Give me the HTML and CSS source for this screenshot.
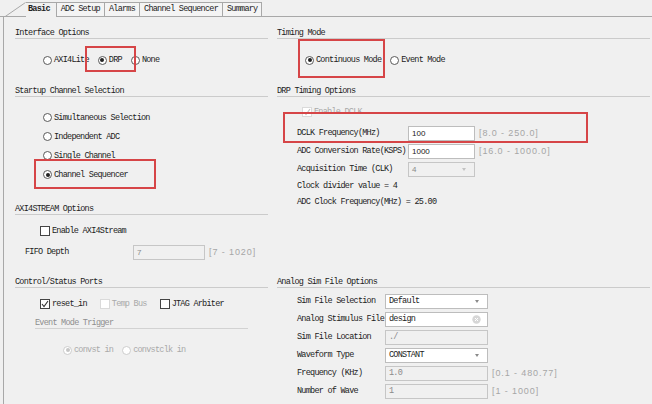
FILE: index.html
```html
<!DOCTYPE html>
<html lang="en">
<head>
    <meta charset="UTF-8">
    <title>XADC Wizard - Basic</title>
    <link rel="stylesheet" href="styles.css">
</head>
<body>
<div class="page">
    <div class="tabs">
        <svg class="tab-slant" width="22" height="15" viewBox="0 0 22 15"><path d="M0.5 15 L21.5 0.5" stroke="#a8a8a8" fill="none"/></svg>
        <div class="tab active">Basic</div>
        <div class="tab">ADC Setup</div>
        <div class="tab">Alarms</div>
        <div class="tab">Channel Sequencer</div>
        <div class="tab">Summary</div>
    </div>

    <div class="panel">
        <!-- Interface Options -->
        <div class="group left">
            <div class="group-title">Interface Options</div>
            <div class="opt-row first">
                <label class="opt"><span class="radio"></span>AXI4Lite</label>
                <label class="opt"><span class="radio on"></span>DRP</label>
                <label class="opt"><span class="radio"></span>None</label>
            </div>
        </div>

        <!-- Timing Mode -->
        <div class="group right">
            <div class="group-title">Timing Mode</div>
            <div class="opt-row first">
                <label class="opt"><span class="radio on"></span>Continuous Mode</label>
                <label class="opt"><span class="radio"></span>Event Mode</label>
            </div>
        </div>

        <!-- Startup Channel Selection -->
        <div class="group left">
            <div class="group-title">Startup Channel Selection</div>
            <div class="opt-list">
                <label class="opt"><span class="radio"></span>Simultaneous Selection</label>
                <label class="opt"><span class="radio"></span>Independent ADC</label>
                <label class="opt"><span class="radio"></span>Single Channel</label>
                <label class="opt"><span class="radio on"></span>Channel Sequencer</label>
            </div>
        </div>

        <!-- DRP Timing Options -->
        <div class="group right drp">
            <div class="group-title">DRP Timing Options</div>
            <div class="check-row dclk">
                <label class="opt disabled"><span class="check off"><svg width="8" height="8" viewBox="0 0 8 8"><path d="M1 4 L3 6.5 L7 1" stroke="#c4c4c4" fill="none" stroke-width="1.2"/></svg></span>Enable DCLK</label>
            </div>
            <div class="fields drp-fields">
                <div class="field-row">
                    <span class="field-label">DCLK Frequency(MHz)</span>
                    <span class="input num">100</span>
                    <span class="range">[8.0 - 250.0]</span>
                </div>
                <div class="field-row">
                    <span class="field-label">ADC Conversion Rate(KSPS)</span>
                    <span class="input num">1000</span>
                    <span class="range">[16.0 - 1000.0]</span>
                </div>
                <div class="field-row">
                    <span class="field-label">Acquisition Time (CLK)</span>
                    <span class="input select disabled num">4<span class="arrow"></span></span>
                </div>
                <div class="info">Clock divider value = 4</div>
                <div class="info">ADC Clock Frequency(MHz) = 25.00</div>
            </div>
        </div>

        <!-- AXI4STREAM Options -->
        <div class="group left">
            <div class="group-title">AXI4STREAM Options</div>
            <div class="check-row stream">
                <label class="opt"><span class="check"></span>Enable AXI4Stream</label>
            </div>
            <div class="field-row fifo">
                <span class="field-label">FIFO Depth</span>
                <span class="input disabled num">7</span>
                <span class="range">[7 - 1020]</span>
            </div>
        </div>

        <!-- Control/Status Ports -->
        <div class="group left">
            <div class="group-title">Control/Status Ports</div>
            <div class="check-row ports">
                <label class="opt"><span class="check"><svg width="8" height="8" viewBox="0 0 8 8"><path d="M1 4 L3 6.5 L7 1" stroke="#333" fill="none" stroke-width="1.1"/></svg></span>reset_in</label>
                <label class="opt disabled"><span class="check off"></span>Temp Bus</label>
                <label class="opt"><span class="check"></span>JTAG Arbiter</label>
            </div>
            <div class="sub-title">Event Mode Trigger</div>
            <div class="opt-row trigger">
                <label class="opt disabled"><span class="radio on off"></span>convst in</label>
                <label class="opt disabled"><span class="radio off"></span>convstclk in</label>
            </div>
        </div>

        <!-- Analog Sim File Options -->
        <div class="group right">
            <div class="group-title">Analog Sim File Options</div>
            <div class="fields sim-fields">
                <div class="field-row">
                    <span class="field-label">Sim File Selection</span>
                    <span class="input wide select">Default<span class="arrow"></span></span>
                </div>
                <div class="field-row">
                    <span class="field-label">Analog Stimulus File</span>
                    <span class="input wide">design<svg class="clear" width="9" height="9" viewBox="0 0 9 9"><circle cx="4.5" cy="4.5" r="4.2" fill="#d6d6d6"/><path d="M3 3 L6 6 M6 3 L3 6" stroke="#fff" stroke-width="1"/></svg></span>
                </div>
                <div class="field-row">
                    <span class="field-label">Sim File Location</span>
                    <span class="input wide disabled">./</span>
                </div>
                <div class="field-row">
                    <span class="field-label">Waveform Type</span>
                    <span class="input wide select">CONSTANT<span class="arrow"></span></span>
                </div>
                <div class="field-row">
                    <span class="field-label">Frequency (KHz)</span>
                    <span class="input wide disabled">1.0</span>
                    <span class="range">[0.1 - 480.77]</span>
                </div>
                <div class="field-row">
                    <span class="field-label">Number of Wave</span>
                    <span class="input wide disabled">1</span>
                    <span class="range">[1 - 1000]</span>
                </div>
            </div>
        </div>
    </div>

    <!-- red annotation boxes -->
    <div class="mark mark-drp"></div>
    <div class="mark mark-seq"></div>
    <div class="mark mark-cont"></div>
    <div class="mark mark-dclk"></div>
</div>
</body>
</html>
```

FILE: styles.css
```css
body {
    margin: 0;
    background: #f0f0f0;
    font-family: "Liberation Mono", monospace;
    font-size: 8.5px;
    letter-spacing: -0.75px;
    color: #222;
}
.page {
    position: relative;
    width: 652px;
    height: 404px;
    overflow: hidden;
}
.tabs {
    display: flex;
    align-items: flex-end;
    height: 16px;
    padding-left: 4px;
    border-bottom: 1px solid #a8a8a8;
}
.tab-slant {
    display: block;
    margin-bottom: -1px;
}
.tab {
    height: 13px;
    line-height: 13px;
    padding: 0 4px;
    border-top: 1px solid #a8a8a8;
    border-right: 1px solid #a8a8a8;
    background: #f4f4f4;
}
.tab.active {
    font-weight: bold;
    padding: 0 6px 0 2px;
    height: 14px;
    margin-bottom: -1px;
    background: #f0f0f0;
}
.panel {
    display: grid;
    grid-template-columns: 268px 1fr;
    grid-template-rows: 58px 118px 73px 1fr;
    grid-auto-flow: column dense;
    margin-left: 3px;
    border-left: 1px solid #a8a8a8;
    padding-top: 11px;
    height: 387px;
    box-sizing: border-box;
}
.group.left {
    grid-column: 1;
    padding: 0 4px 0 11px;
}
.group.right {
    grid-column: 2;
    padding: 0 2px 0 5px;
}
.group.drp {
    grid-row: span 2;
}
.group-title {
    line-height: 10px;
    border-bottom: 1px solid #cbcbcb;
}
.opt-row {
    display: flex;
    align-items: center;
    gap: 9px;
    height: 16px;
    padding-left: 28px;
}
.opt-row.first {
    margin-top: 13px;
}
.opt-list {
    display: flex;
    flex-direction: column;
    margin-top: 11px;
    padding-left: 28px;
}
.opt-list .opt {
    height: 19px;
}
.opt {
    display: inline-flex;
    align-items: center;
    gap: 2px;
    white-space: nowrap;
}
.opt.disabled {
    color: #a9a9a9;
}
.radio {
    position: relative;
    width: 9px;
    height: 9px;
    box-sizing: border-box;
    border: 1px solid #5a5a5a;
    border-radius: 50%;
    background: #fff;
}
.radio.on::after {
    content: "";
    position: absolute;
    left: 1.5px;
    top: 1.5px;
    width: 4px;
    height: 4px;
    border-radius: 50%;
    background: #222;
}
.radio.off {
    border-color: #cdcdcd;
}
.radio.on.off::after {
    background: #c6c6c6;
}
.check {
    display: inline-flex;
    align-items: center;
    justify-content: center;
    width: 10px;
    height: 10px;
    box-sizing: border-box;
    border: 1px solid #444;
    background: #fff;
}
.check.off {
    border-color: #dadada;
}
.check-row {
    display: flex;
    align-items: center;
    gap: 13px;
    height: 18px;
    padding-left: 25px;
}
.check-row.dclk {
    margin-top: 6px;
}
.check-row.stream,
.check-row.ports {
    margin-top: 7px;
}
.sub-title {
    margin: 5px 20px 0 20px;
    line-height: 10px;
    color: #8e8e8e;
    border-bottom: 1px solid #d2d2d2;
}
.opt-row.trigger {
    margin-top: 12px;
    height: 18px;
    padding-left: 48px;
}
.fields {
    padding-left: 20px;
}
.drp-fields {
    margin-top: 3px;
}
.sim-fields {
    margin-top: 4px;
}
.field-row {
    display: flex;
    align-items: center;
    height: 18px;
}
.field-label {
    width: 111px;
    flex-shrink: 0;
    white-space: nowrap;
}
.sim-fields .field-label {
    width: 88px;
}
.field-row.fifo {
    margin-top: 3px;
    padding-left: 10px;
}
.fifo .field-label {
    width: 108px;
}
.input {
    position: relative;
    display: flex;
    align-items: center;
    width: 67px;
    height: 15px;
    box-sizing: border-box;
    padding: 0 3px;
    border: 1px solid #bdbdbd;
    background: #fff;
}
.fifo .input {
    width: 72px;
}
.input.wide {
    width: 103px;
}
.input.num {
    font-family: "Liberation Sans", sans-serif;
    letter-spacing: 0;
    font-size: 8px;
}
.input.disabled {
    background: #f0f0f0;
    border-color: #c6c6c6;
    color: #8a8a8a;
}
.select .arrow {
    position: absolute;
    right: 8px;
    top: 5px;
    border-left: 2.5px solid transparent;
    border-right: 2.5px solid transparent;
    border-top: 3px solid #8a8a8a;
}
.select.disabled .arrow {
    border-top-color: #c2c2c2;
}
.input .clear {
    position: absolute;
    right: 6px;
    top: 2px;
}
.range {
    margin-left: 4px;
    font-family: "Liberation Sans", sans-serif;
    letter-spacing: 0.9px;
    font-size: 9px;
    color: #a6a6a6;
    white-space: nowrap;
}
.info {
    line-height: 15px;
    margin-top: 1px;
}
.mark {
    position: absolute;
    box-sizing: border-box;
    border: 2px solid #d64547;
}
.mark-drp {
    left: 85px;
    top: 46px;
    width: 51px;
    height: 26px;
}
.mark-seq {
    left: 34px;
    top: 159px;
    width: 122px;
    height: 30px;
}
.mark-cont {
    left: 298px;
    top: 39px;
    width: 87px;
    height: 39px;
}
.mark-dclk {
    left: 283px;
    top: 112px;
    width: 305px;
    height: 31px;
}
```
